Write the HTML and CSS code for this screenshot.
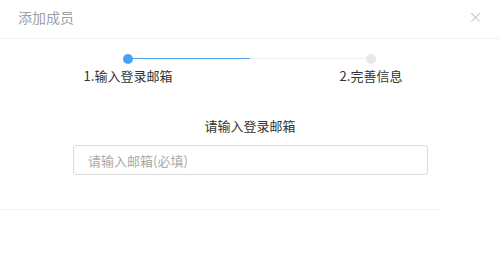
FILE: index.html
```html
<!DOCTYPE html>
<html lang="zh">
<head>
<meta charset="utf-8">
<link rel="stylesheet" href="styles.css">
</head>
<body>
<div class="dialog">
  <div class="header">
    <span class="title">添加成员</span>
    <span class="close">×</span>
  </div>
  <div class="track">
    <span class="dot active"></span>
    <span class="line done"></span>
    <span class="line"></span>
    <span class="dot"></span>
  </div>
  <div class="labels">
    <span class="label">1.输入登录邮箱</span>
    <span class="label">2.完善信息</span>
  </div>
  <div class="prompt">请输入登录邮箱</div>
  <input class="field" type="text" placeholder="请输入邮箱(必填)">
  <div class="footer"></div>
</div>
</body>
</html>
```
FILE: styles.css
```css
html, body {
  margin: 0;
  padding: 0;
  background: #fff;
}
body {
  font-family: "Noto Sans CJK SC", "Noto Sans", sans-serif;
  width: 500px;
  height: 267px;
  overflow: hidden;
}
.dialog {
  display: flex;
  flex-direction: column;
}
.header {
  height: 39px;
  box-sizing: border-box;
  border-bottom: 1px solid #f2f2f2;
  display: flex;
  align-items: center;
  justify-content: space-between;
  padding: 0 17px 4px 18px;
}
.title {
  font-size: 14px;
  color: #9aa0a8;
  line-height: 18px;
}
.close {
  font-size: 18px;
  color: #c6c6c6;
  line-height: 18px;
  font-family: "DejaVu Sans", sans-serif;
  font-weight: 300;
}
.track {
  display: flex;
  align-items: flex-start;
  margin: 15px 124px 0 123px;
  height: 10px;
}
.dot {
  width: 10px;
  height: 10px;
  border-radius: 50%;
  background: #e8e8e8;
  flex: none;
}
.dot.active {
  background: #4aa3f0;
}
.line {
  flex: 1;
  height: 1px;
  margin-top: 4px;
  background: #eeeeee;
}
.line.done {
  background: #4aa3f0;
}
.labels {
  display: grid;
  grid-template-columns: 160px 160px;
  column-gap: 83px;
  margin: 3px 0 0 48px;
}
.label {
  text-align: center;
  font-size: 13px;
  line-height: 18px;
  color: #333;
}
.prompt {
  margin-top: 32px;
  text-align: center;
  font-size: 13px;
  line-height: 18px;
  color: #333;
}
.field {
  margin: 10px 0 0 73px;
  width: 355px;
  height: 30px;
  box-sizing: border-box;
  border: 1px solid #dcdcdc;
  border-radius: 3px;
  padding: 0 14px;
  font-family: inherit;
  font-size: 13px;
  color: #333;
  outline: none;
}
.field::placeholder {
  color: #a8a8a8;
}
.footer {
  margin-top: 34px;
  width: 440px;
  border-top: 1px solid #f2f2f2;
}
```
